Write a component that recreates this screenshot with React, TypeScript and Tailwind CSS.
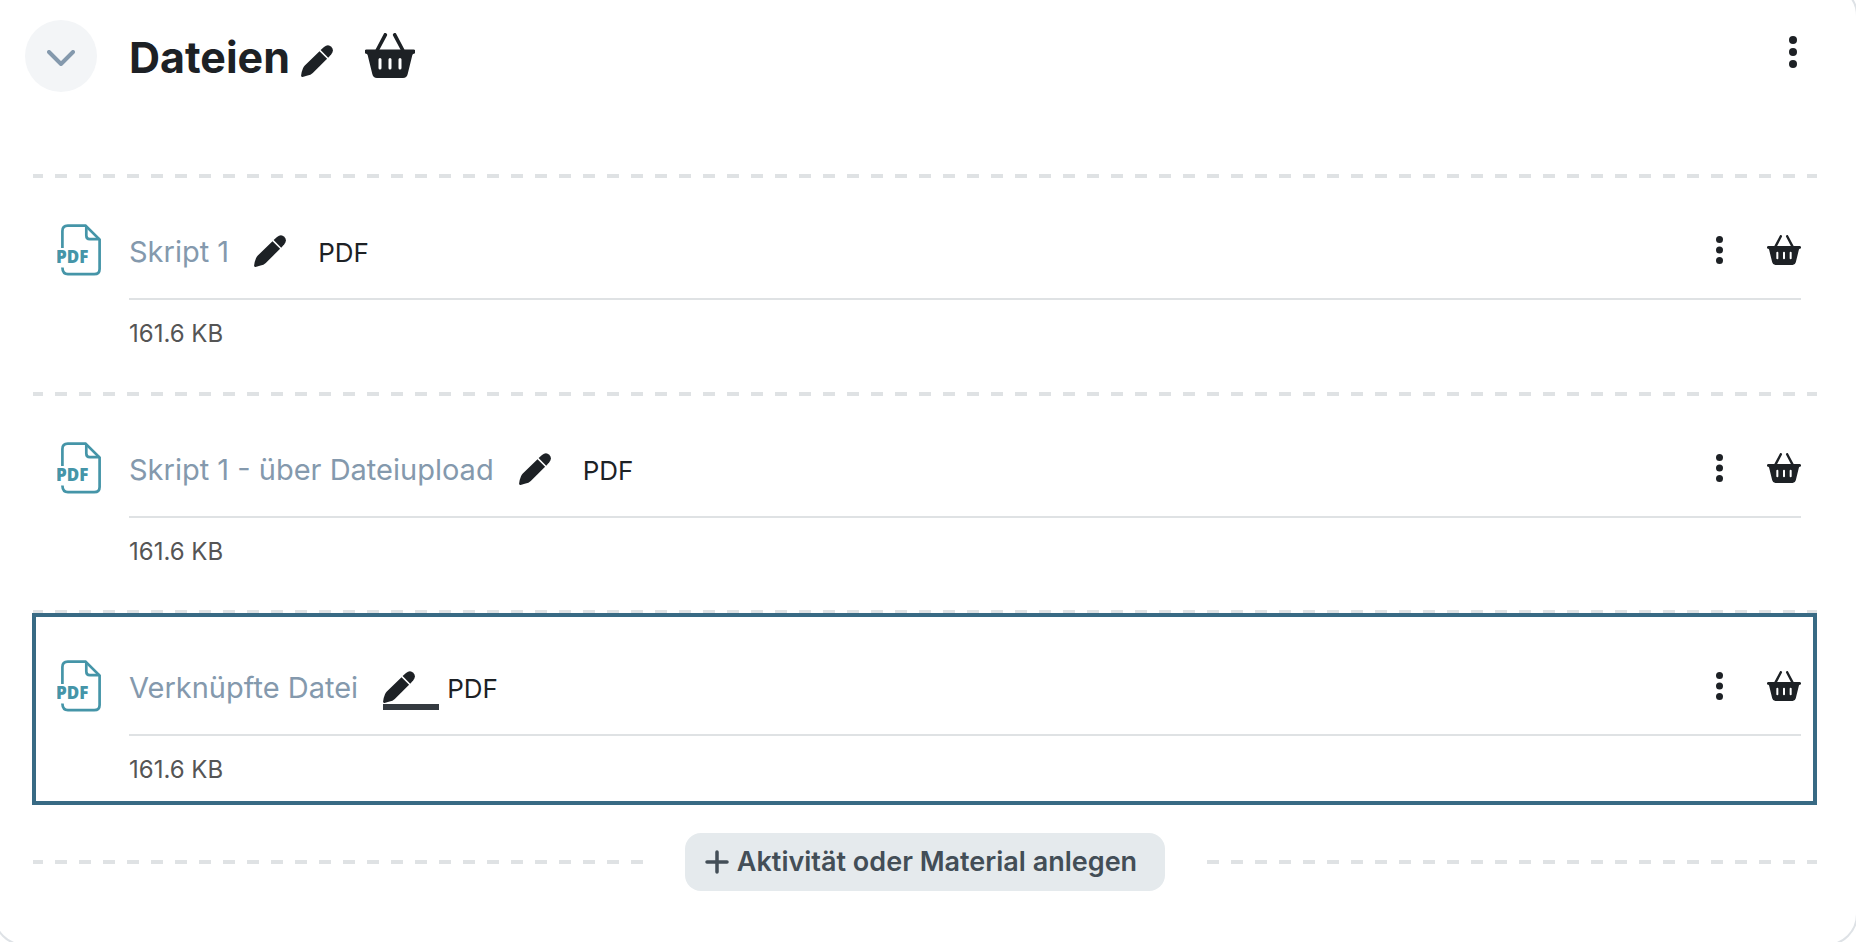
import type { ReactNode } from 'react'

const FILES = [
  { name: 'Skript 1',                    size: '161.6 KB', active: false },
  { name: 'Skript 1 - über Dateiupload', size: '161.6 KB', active: false },
  { name: 'Verknüpfte Datei',            size: '161.6 KB', active: true  },
]

function PencilIcon({ className }: { className: string }) {
  return (
    <svg viewBox="0 0 32 32" fill="currentColor" className={className} aria-hidden>
      <path d="M18.500 6.200L26.100 13.800L11.800 27.900Q9.600 29.900 6.600 30.600L1.500 31.900Q0 32.200.1 30.600Q.6 26.300 2 23.200Q2.700 21.700 3.800 20.600z" />
      <path d="M19.600 5.100L23 1.900Q27-1.500 30.300 1.700Q33.500 5.200 30.300 9.200L27.200 12.700z" />
    </svg>
  )
}

function BasketIcon({ className }: { className: string }) {
  return (
    <svg viewBox="0 0 50 45" fill="none" className={className} aria-hidden>
      <path d="M20.300 1.800L12.300 17M29.700 1.800L37.700 17" stroke="currentColor" strokeWidth="3.600" strokeLinecap="round" />
      <path
        fill="currentColor"
        fillRule="evenodd"
        d="M2 16.500H48a2 2 0 0 1 .8 4.200Q47.600 21 47.300 22.300L42.700 41Q41.800 45 38 45H12Q8.200 45 7.300 41L2.700 22.300Q2.400 21 1.200 20.700A2 2 0 0 1 2 16.500zM13.500 26.500v8.500a1.500 1.500 0 0 0 3 0v-8.500a1.500 1.500 0 0 0-3 0zM23.500 26.500v8.500a1.500 1.500 0 0 0 3 0v-8.500a1.500 1.500 0 0 0-3 0zM33.500 26.500v8.500a1.500 1.500 0 0 0 3 0v-8.500a1.500 1.500 0 0 0-3 0z"
      />
    </svg>
  )
}

function DotsIcon({ className }: { className: string }) {
  return (
    <svg viewBox="0 0 8 32" fill="currentColor" className={className} aria-hidden>
      <circle cx="4" cy="4" r="4" />
      <circle cx="4" cy="16" r="4" />
      <circle cx="4" cy="28" r="4" />
    </svg>
  )
}

function PdfIcon() {
  return (
    <svg viewBox="0 0 44 52" fill="none" className="h-[52px] w-11 shrink-0 text-[#4595a8]" aria-hidden>
      <g stroke="currentColor" strokeWidth="2.700">
        <path d="M5.400 24V7Q5.400 1.600 10.800 1.600H28.500L42.600 15.500V45Q42.600 50.200 37.200 50.200H11Q5.600 50.200 5.400 43.500" />
        <path d="M29.300 2V11.600Q29.300 15.200 32.800 15.200H42.500" />
      </g>
      <text x="-1" y="39" fontSize="17" fontWeight="800" fill="currentColor" className="font-['Open_Sans',sans-serif]">PDF</text>
    </svg>
  )
}

function IconButton({ label, className = '', children }: { label: string; className?: string; children: ReactNode }) {
  return (
    <button type="button" aria-label={label} className={`shrink-0 cursor-pointer ${className}`}>
      {children}
    </button>
  )
}

function Divider() {
  return <div className="h-1 bg-[linear-gradient(90deg,#dfe2e4_50%,transparent_50%)] bg-[length:24px_4px] bg-[position:-2px_0]" />
}

function FileRow({ name, size, active }: (typeof FILES)[number]) {
  return (
    <li>
      <Divider />
      <div className="-mt-px h-[215px]">
        <div className={`-ml-px flex h-48 border-4 pt-[43px] pr-3 pl-[21px] ${active ? 'border-[#386a84]' : 'border-transparent'}`}>
          <PdfIcon />
          <div className="ml-7 flex-1">
            <div className="flex h-[76px] items-start border-b-2 border-[#dfe2e4]">
              <div className="flex flex-1 items-start pt-[9px]">
                <a href="#" className="text-[29px] leading-[38px] text-[#8499ad]">{name}</a>
                <IconButton
                  label={`${name} bearbeiten`}
                  className={`ml-[25px] h-[41px] w-14 border-b-6 ${active ? 'border-[#343a40]' : 'border-transparent'}`}
                >
                  <PencilIcon className="size-8" />
                </IconButton>
                <span className="ml-2 text-[26px] leading-10">PDF</span>
              </div>
              <div className="flex items-center gap-11 pt-[11px]">
                <IconButton label="Aktionen">
                  <DotsIcon className="h-7 w-[7px]" />
                </IconButton>
                <IconButton label="In den Warenkorb">
                  <BasketIcon className="h-[30px] w-[34px]" />
                </IconButton>
              </div>
            </div>
            <p className="mt-4 text-2xl leading-9 text-[#555]">{size}</p>
          </div>
        </div>
      </div>
    </li>
  )
}

export default function App() {
  return (
    <div className="h-screen overflow-hidden bg-white font-['Inter',sans-serif] text-[#1d2125]">
      <section className="-mt-4 -mr-0.5 -ml-[7px] rounded-[32px] border-2 border-[#dee2e6] pt-[34px] pr-[39px] pb-[53px] pl-[38px]">
        <header className="-ml-2 flex h-[154px] items-start">
          <button
            type="button"
            aria-label="Abschnitt einklappen"
            className="flex size-[72px] shrink-0 items-center justify-center rounded-full bg-[#f3f5f7] text-[#8499ad]"
          >
            <svg viewBox="0 0 28 16" fill="none" className="mt-1 h-4 w-7" aria-hidden>
              <path d="M2 2l12 12L26 2" stroke="currentColor" strokeWidth="4" strokeLinecap="round" strokeLinejoin="round" />
            </svg>
          </button>
          <h2 className="ml-8 text-[43px] leading-[74px] font-bold">Dateien</h2>
          <IconButton label="Abschnittsname bearbeiten" className="mt-[25px] ml-[11px]">
            <PencilIcon className="size-8" />
          </IconButton>
          <IconButton label="Abschnitt in den Warenkorb" className="mt-[13px] ml-8">
            <BasketIcon className="h-[45px] w-[50px]" />
          </IconButton>
          <IconButton label="Abschnitt bearbeiten" className="mt-4 mr-5 ml-auto">
            <DotsIcon className="h-8 w-2" />
          </IconButton>
        </header>

        <ul>
          {FILES.map(file => <FileRow key={file.name} {...file} />)}
        </ul>

        <div className="mt-[5px] flex justify-center bg-[linear-gradient(90deg,#dfe2e4_50%,transparent_50%)] bg-[length:24px_4px] bg-[position:-2px_center] bg-repeat-x">
          <div className="bg-white px-10">
            <button
              type="button"
              className="flex h-[58px] items-center gap-2 rounded-2xl bg-[#e5eaed] pr-7 pl-5 text-[27px] font-semibold text-[#434e57]"
            >
              <svg viewBox="0 0 24 24" fill="none" className="size-6" aria-hidden>
                <path d="M12 2v20M2 12h20" stroke="currentColor" strokeWidth="3.500" strokeLinecap="round" />
              </svg>
              Aktivität oder Material anlegen
            </button>
          </div>
        </div>
      </section>
    </div>
  )
}
